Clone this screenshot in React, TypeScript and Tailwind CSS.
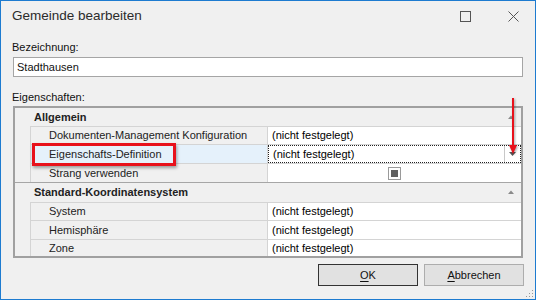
import React from 'react';

const font = "font-['Liberation_Sans',Arial,sans-serif]";

function Category({ label, first }: { label: string; first?: boolean }) {
  return (
    <div
      className={`flex items-center pl-[19px] pr-[7px] font-bold text-[#222] ${
        first ? 'h-[18px]' : 'h-[20px] border-t border-[#a6a6a6]'
      }`}
    >
      <span className="flex-1">{label}</span>
      <svg width="6" height="4" viewBox="0 0 6 4">
        <path d="M0 4 L3 0.5 L6 4 Z" fill="#8a8a8a" />
      </svg>
    </div>
  );
}

function Row({
  name,
  value,
  selected,
  last,
  children,
}: {
  name: string;
  value?: string;
  selected?: boolean;
  last?: boolean;
  children?: React.ReactNode;
}) {
  return (
    <div className={`flex ${last ? 'h-[17px]' : 'h-[19px]'}`}>
      <div className="w-[15px] shrink-0" />
      <div
        className={`w-[237px] shrink-0 border-l border-t border-[#d4d4d4] pl-[18px] flex items-center text-[#222] ${
          selected ? 'bg-[#e5f1fb]' : ''
        }`}
      >
        {name}
      </div>
      <div className="flex-1 border-l border-t border-[#d4d4d4] bg-white flex items-center relative">
        {selected ? (
          <div className="absolute inset-0 border border-dotted border-[#222] flex items-center pl-[4px]">
            <span className="flex-1">{value}</span>
            <div className="w-[16px] h-full border-l border-[#c8c8c8] flex items-center justify-center">
              <svg width="7" height="4" viewBox="0 0 7 4">
                <path d="M0 0 L7 0 L3.5 4 Z" fill="#555" />
              </svg>
            </div>
          </div>
        ) : (
          children ?? <span className="pl-[4px]">{value}</span>
        )}
      </div>
    </div>
  );
}

export default function App() {
  const nf = '(nicht festgelegt)';
  return (
    <div
      className={`${font} w-[536px] h-[300px] bg-[#f0f0f0] border border-[#1d7bd0] flex flex-col text-[11px] text-black relative overflow-hidden`}
    >
      {/* Title bar */}
      <div className="h-[31px] shrink-0 flex items-center pl-[11px] pr-[16px]">
        <span className="flex-1 text-[13.5px] text-[#2b2b2b]">Gemeinde bearbeiten</span>
        <div className="w-[11px] h-[11px] border border-[#555] mr-[37px]" />
        <svg width="11" height="11" viewBox="0 0 11 11">
          <path d="M0.5 0.5 L10.5 10.5 M10.5 0.5 L0.5 10.5" stroke="#555" strokeWidth="1" />
        </svg>
      </div>

      {/* Body */}
      <div className="flex flex-col px-[12px]">
        <div className="h-[15px] mt-[8px] leading-[15px] -ml-px text-[#111]">Bezeichnung:</div>
        <div className="h-[20px] mt-[2px] border border-[#a5a5a5] bg-white flex items-center pl-[3px] text-[#111]">
          Stadthausen
        </div>
        <div className="h-[15px] mt-[13px] leading-[15px] -ml-px text-[#111]">Eigenschaften:</div>

        {/* Property grid */}
        <div className="h-[152px] mt-px border-2 border-[#a0a0a0] flex flex-col overflow-hidden">
          <Category label="Allgemein" first />
          <Row name="Dokumenten-Management Konfiguration" value={nf} />
          <Row name="Eigenschafts-Definition" value={nf} selected />
          <Row name="Strang verwenden">
            <div className="flex-1 flex justify-center">
              <div className="w-[13px] h-[13px] border border-[#9a9a9a] bg-white p-[2px]">
                <div className="w-full h-full bg-[#606060]" />
              </div>
            </div>
          </Row>
          <Category label="Standard-Koordinatensystem" />
          <Row name="System" value={nf} />
          <Row name="Hemisphäre" value={nf} />
          <Row name="Zone" value={nf} last />
        </div>

        {/* Buttons */}
        <div className="flex justify-end gap-[6px] mt-[6px] -mr-px">
          <button className="w-[100px] h-[22px] bg-[#e1e1e1] border border-[#333] text-[#111]">
            <span className="underline underline-offset-2">O</span>K
          </button>
          <button className="w-[100px] h-[22px] bg-[#e1e1e1] border border-[#adadad] text-[#111]">
            <span className="underline underline-offset-2">A</span>bbrechen
          </button>
        </div>
      </div>

      {/* Annotation: red rectangle */}
      <div className="absolute left-[31px] top-[142px] w-[144px] h-[23px] border-[3px] border-[#e8111b] shadow-[1px_2px_3px_rgba(0,0,0,0.35)]" />

      {/* Annotation: red arrow */}
      <svg className="absolute left-[505px] top-[96px]" width="14" height="60" viewBox="0 0 14 60">
        <g style={{ filter: 'drop-shadow(1px 1px 1px rgba(0,0,0,0.35))' }}>
          <rect x="6" y="1" width="2" height="50" fill="#e8111b" />
          <path d="M3 48 L11 48 L7 57 Z" fill="#e8111b" />
        </g>
      </svg>

      {/* Size grip */}
      <svg className="absolute right-[1px] bottom-[1px]" width="8" height="8" viewBox="0 0 8 8">
        <rect x="6" y="0" width="1" height="1" fill="#999" />
        <rect x="3" y="3" width="1" height="1" fill="#999" />
        <rect x="6" y="3" width="1" height="1" fill="#999" />
        <rect x="0" y="6" width="1" height="1" fill="#999" />
        <rect x="3" y="6" width="1" height="1" fill="#999" />
        <rect x="6" y="6" width="1" height="1" fill="#999" />
      </svg>
    </div>
  );
}
